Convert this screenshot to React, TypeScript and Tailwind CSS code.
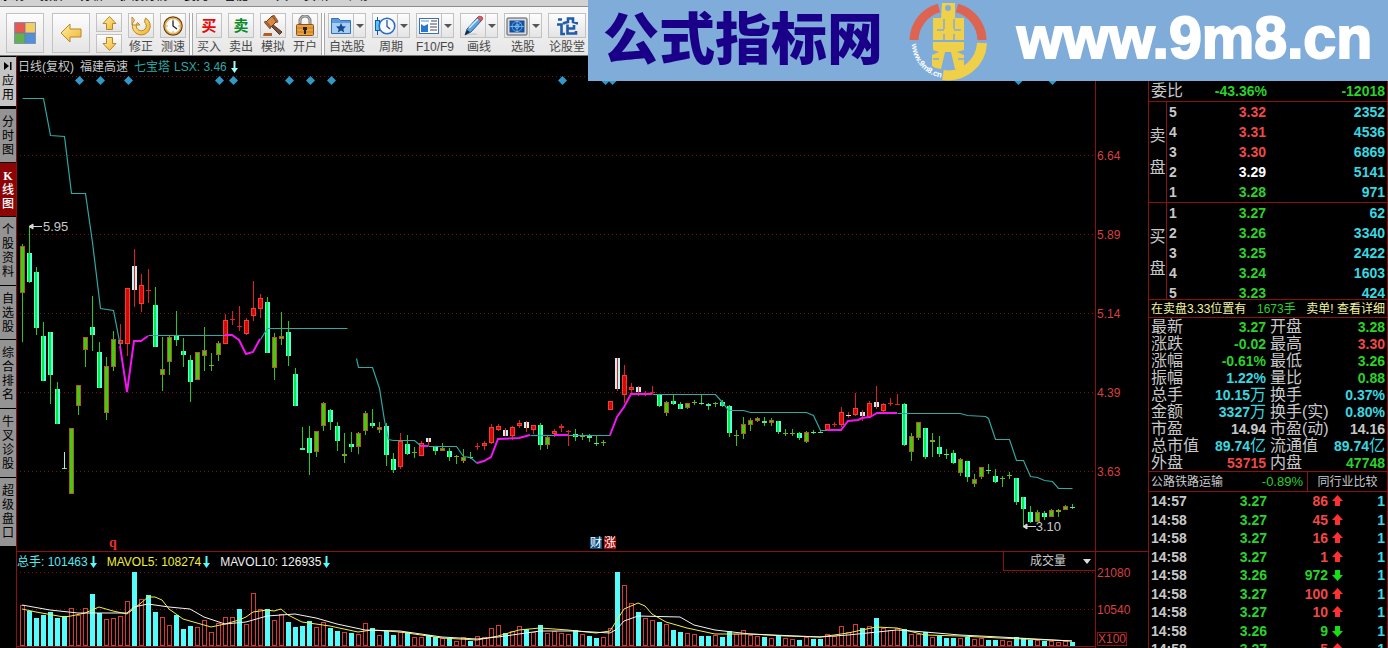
import React from "react";

type Kind = "d" | "g" | "r" | "w";
type Candle = [number, number, number, number, Kind];

// high, body top, body bottom, low, kind
const candles: Candle[] = [
  [244, 246, 293, 342, "g"], [226, 253, 282, 283, "d"], [267, 272, 328, 335, "d"], [322, 336, 381, 381, "d"],
  [332, 332, 375, 404, "d"], [382, 389, 424, 424, "d"], [452, 468, 469, 469, "d"], [428, 428, 494, 494, "g"],
  [385, 385, 406, 415, "g"], [337, 337, 350, 367, "g"], [296, 327, 335, 351, "d"], [342, 352, 388, 388, "d"],
  [357, 366, 413, 420, "g"], [331, 339, 367, 371, "g"], [324, 340, 344, 350, "r"], [288, 288, 344, 356, "r"],
  [249, 266, 290, 307, "w"], [274, 285, 304, 312, "r"], [269, 290, 291, 303, "r"], [287, 305, 347, 347, "d"],
  [337, 369, 375, 391, "g"], [336, 337, 362, 375, "g"], [311, 336, 340, 346, "d"], [338, 351, 355, 367, "d"],
  [355, 360, 382, 402, "d"], [352, 352, 380, 380, "g"], [327, 350, 356, 371, "g"], [353, 365, 366, 371, "g"],
  [341, 343, 355, 361, "g"], [314, 320, 344, 344, "r"], [311, 319, 320, 325, "r"], [306, 326, 327, 331, "r"],
  [318, 320, 334, 335, "r"], [281, 308, 316, 321, "r"], [294, 298, 309, 318, "r"], [297, 302, 353, 353, "d"],
  [333, 337, 368, 380, "g"], [312, 336, 339, 345, "g"], [321, 332, 356, 366, "d"], [368, 374, 406, 406, "d"],
  [427, 448, 450, 450, "d"], [426, 438, 453, 475, "d"], [431, 431, 452, 457, "g"], [402, 403, 426, 431, "g"],
  [409, 410, 422, 430, "d"], [422, 426, 441, 451, "d"], [433, 454, 456, 463, "g"], [432, 444, 447, 452, "d"],
  [432, 433, 447, 454, "g"], [411, 413, 431, 435, "g"], [409, 423, 426, 428, "d"], [422, 427, 430, 433, "g"],
  [423, 426, 455, 466, "d"], [453, 459, 470, 473, "d"], [433, 441, 467, 469, "r"], [435, 444, 454, 455, "d"],
  [447, 452, 453, 458, "g"], [441, 443, 456, 456, "r"], [438, 438, 442, 446, "w"], [447, 447, 451, 455, "d"],
  [443, 448, 451, 451, "g"], [448, 451, 457, 461, "d"], [455, 456, 457, 464, "g"], [449, 457, 461, 463, "g"],
  [452, 457, 458, 459, "d"], [443, 446, 447, 450, "r"], [441, 443, 446, 450, "r"], [424, 427, 443, 444, "r"],
  [424, 426, 430, 431, "r"], [428, 430, 436, 436, "w"], [426, 427, 436, 440, "r"], [420, 423, 426, 428, "r"],
  [421, 422, 428, 432, "w"], [425, 425, 430, 434, "r"], [423, 425, 445, 450, "d"], [436, 437, 445, 449, "g"],
  [429, 431, 434, 437, "r"], [424, 426, 428, 432, "r"], [430, 431, 432, 446, "r"], [429, 434, 437, 441, "d"],
  [433, 436, 437, 440, "g"], [434, 436, 438, 442, "d"], [436, 443, 444, 446, "d"], [440, 442, 443, 446, "g"],
  [401, 401, 410, 410, "r"], [358, 358, 389, 391, "w"], [365, 375, 395, 403, "r"], [383, 387, 390, 393, "r"],
  [386, 387, 392, 396, "w"], [391, 394, 395, 396, "r"], [386, 392, 393, 394, "r"], [394, 395, 406, 407, "d"],
  [401, 402, 413, 416, "g"], [394, 401, 404, 405, "d"], [402, 404, 409, 409, "d"], [403, 403, 408, 409, "g"],
  [400, 402, 403, 405, "g"], [395, 403, 404, 405, "d"], [403, 404, 406, 410, "d"], [402, 403, 404, 407, "g"],
  [400, 402, 406, 407, "d"], [405, 406, 433, 437, "d"], [430, 435, 436, 446, "g"], [417, 424, 434, 439, "g"],
  [418, 420, 425, 431, "g"], [417, 418, 421, 422, "g"], [417, 421, 423, 426, "d"], [418, 420, 423, 426, "g"],
  [421, 421, 432, 434, "d"], [429, 433, 434, 436, "g"], [429, 433, 434, 436, "g"], [432, 433, 438, 440, "d"],
  [431, 432, 442, 443, "g"], [430, 432, 433, 434, "d"], [430, 432, 433, 433, "d"], [424, 424, 430, 430, "r"],
  [422, 424, 425, 427, "r"], [407, 412, 425, 427, "r"], [412, 415, 416, 418, "w"], [393, 408, 415, 416, "r"],
  [410, 412, 416, 421, "w"], [401, 403, 417, 417, "r"], [386, 402, 407, 409, "w"], [403, 404, 411, 412, "r"],
  [398, 403, 404, 406, "r"], [394, 404, 405, 405, "r"], [403, 404, 445, 446, "d"], [433, 436, 452, 461, "g"],
  [422, 422, 438, 440, "g"], [428, 428, 457, 459, "d"], [433, 440, 442, 457, "g"], [436, 447, 454, 457, "d"],
  [449, 454, 455, 459, "d"], [450, 453, 463, 464, "d"], [458, 459, 473, 476, "g"], [461, 461, 477, 482, "d"],
  [474, 479, 484, 487, "g"], [467, 467, 477, 479, "g"], [464, 470, 471, 474, "d"], [469, 476, 482, 483, "d"],
  [476, 478, 479, 487, "g"], [472, 475, 476, 479, "g"], [478, 478, 502, 505, "d"], [497, 497, 509, 526, "d"],
  [506, 512, 522, 523, "d"], [510, 512, 522, 522, "g"], [511, 513, 517, 520, "d"], [509, 510, 517, 517, "g"],
  [509, 510, 512, 517, "g"], [505, 506, 510, 510, "g"], [504, 507, 508, 509, "d"],
];

// top of each volume bar; negative values are falling days
const volumes = [
  605, -611, -618, -615, -612, -618, -616, 608, 615, 608, -594, -613, 619, 618, 616, 601, -572, 599, -595, -612,
  617, 625, -615, -629, -626, 627, 620, 632, 623, 617, 617, -609, 624, 593, 609, -609, 620, 614, -622, -627,
  -626, -621, 627, 622, -628, -631, 632, -633, 634, 623, -628, 635, -631, -635, 632, -632, 637, 637, -635, -637,
  638, -638, 641, 637, -641, 636, 637, 628, 625, -633, 631, 626, -629, 632, -625, 633, 631, 633, 634, -630,
  634, -636, -638, 637, 628, -572, 585, 603, -612, 618, 620, -622, 624, -630, -632, 633, 634, -636, -636, 635,
  -637, -631, 634, 630, 635, 636, -637, 638, -636, 638, 639, -640, 637, -639, -639, 634, 636, 626, 632, 624,
  -628, 626, -618, 628, 630, 628, -629, 634, 634, -632, 637, -636, -638, -638, 638, -637, 639, 638, -640, -640,
  640, 641, -637, -638, -640, 640, -641, 641, 642, 641, -642,
];

const ma5 = "22,609 36,612 64,617 71,616 85,613 99,607 113,611 127,614 141,603 148,597 155,597 162,600 169,609 183,619 204,625 211,627 225,624 239,620 246,617 253,612 267,610 274,611 281,609 288,615 302,622 330,626 358,632 372,630 400,632 442,638 477,640 498,636 519,630 540,628 568,630 596,633 610,631 617,620 624,609 638,603 645,606 652,614 666,622 687,628 715,634 750,634 785,636 820,637 848,633 876,627 897,628 925,635 960,636 1000,638 1072,641";
const ma10 = "22,605 50,610 78,613 127,613 134,607 148,604 169,607 190,609 204,617 225,624 246,622 267,616 295,614 316,618 337,624 365,630 400,631 442,637 477,639 498,637 519,634 540,631 575,631 610,633 617,629 624,621 638,616 680,617 694,625 715,630 750,634 820,637 848,635 897,630 925,632 960,635 1000,637 1072,641";

const trend = [
  "22,98 43,98 50,135 64,136 71,193 85,193 92,242 100,308 113,310 120,346",
  "148,335 225,335",
  "260,339 267,328 347,328",
  "356,358 358,367 372,367 379,388 384,420 388,439 393,440 414,440 421,446",
  "428,446 456,446 463,456 470,457 477,463",
  "530,435 554,435", "568,435 610,435",
  "652,394 715,394 722,402 728,410 743,410 750,412 806,412 813,415 820,430 827,430",
  "897,413 960,413 967,415 985,416 988,418 995,439 1009,439 1016,460 1023,460 1030,476 1037,477 1044,480 1052,481 1058,488 1072,488",
];
const strong = [
  "120,346 127,392 134,341 141,341 148,336",
  "225,335 232,335 239,340 246,354 253,352 260,339",
  "421,446 428,446",
  "477,463 484,461 491,457 498,439 519,438 530,435",
  "554,435 568,435",
  "610,435 617,417 624,407 631,394 652,394",
  "827,430 841,430 848,421 858,420 862,418 870,417 877,413 897,413",
];
const diamonds = [79, 100, 128, 219, 233, 289, 310, 331, 562, 605, 612, 1018, 1052];

const wick: Record<Kind, string> = { d: "#25c825", g: "#35c020", r: "#e02020", w: "#e02020" };

function CandleShape({ c, x }: { c: Candle; x: number }) {
  const [hi, top, bot, lo, k] = c;
  const h = Math.max(1, bot - top);
  return (
    <g>
      <rect x={x} y={hi} width={1} height={Math.max(1, lo - hi)} fill={wick[k]} />
      {h <= 2 ? (
        <rect x={x - 2} y={top} width={5} height={h} fill={k === "d" ? "#50e8a0" : k === "g" ? "#80a818" : k === "r" ? "#e82020" : "#e8d0d0"} />
      ) : k === "d" ? (
        <>
          <rect x={x - 2} y={top} width={5} height={h} fill="#5cffdc" />
          <rect x={x - 1} y={top} width={2} height={h} fill="#00f040" />
        </>
      ) : k === "g" ? (
        <>
          <rect x={x - 2} y={top} width={5} height={h} fill="#b85a20" />
          <rect x={x - 1} y={top + 1} width={3} height={h - 2} fill="#38d010" />
        </>
      ) : k === "r" ? (
        <>
          <rect x={x - 2} y={top} width={5} height={h} fill="#f04030" />
          <rect x={x - 1} y={top + 1} width={3} height={h - 2} fill="#d80808" />
        </>
      ) : (
        <>
          <rect x={x - 2} y={top} width={5} height={h} fill="#c8f0f0" />
          <rect x={x} y={top} width={1} height={h} fill="#f02020" />
        </>
      )}
    </g>
  );
}

function PriceChart() {
  return (
    <svg viewBox="17 76 1078 475" preserveAspectRatio="none" className="absolute inset-0 h-full w-full" role="img" aria-label="日线图">
      <g stroke="#7a1212" strokeDasharray="1 3" shapeRendering="crispEdges">
        {[76, 155, 234, 313, 392, 471].map((y) => (
          <line key={y} x1={20} x2={1095} y1={y + 0.5} y2={y + 0.5} />
        ))}
      </g>
      {diamonds.map((x) => (
        <path key={x} d={`M${x + 0.5} 76l4.5 4.5-4.5 4.5-4.5-4.5z`} fill="#2f9ac8" />
      ))}
      <g shapeRendering="crispEdges">
        {candles.map((c, i) => (
          <CandleShape key={i} c={c} x={22 + i * 7} />
        ))}
        <rect x={64} y={452} width={1} height={17} fill="#a0f0f0" />
      </g>
      <g fill="none" stroke="#2ea9a4" strokeWidth={1.2}>
        {trend.map((p) => <polyline key={p} points={p} transform="translate(.5 .5)" />)}
      </g>
      <g fill="none" stroke="#f414f4" strokeWidth={2}>
        {strong.map((p) => <polyline key={p} points={p} />)}
      </g>
      <g stroke="#d8d8d8" fill="#d8d8d8">
        <path d="M30 226.500H42M29 226.500l4-2.500v5zM1024 526.500H1036M1023 526.500l4-2.500v5z" />
      </g>
    </svg>
  );
}

function VolumeChart() {
  return (
    <svg viewBox="17 571 1078 77" preserveAspectRatio="none" className="h-full w-full" role="img" aria-label="成交量图">
      <g stroke="#7a1212" strokeDasharray="1 3" shapeRendering="crispEdges">
        <line x1={20} x2={1095} y1={572.5} y2={572.5} />
        <line x1={20} x2={1095} y1={609.5} y2={609.5} />
      </g>
      <g shapeRendering="crispEdges">
        {volumes.map((v, i) => {
          const top = Math.abs(v);
          const x = 20 + i * 7;
          return v < 0 ? (
            <rect key={i} x={x} y={top} width={5} height={646 - top} fill="#54fcfc" />
          ) : (
            <rect key={i} x={x + 0.5} y={top + 0.5} width={4} height={645 - top} fill="#000" stroke="#d83a3a" />
          );
        })}
        <line x1={17} x2={1095} y1={646.5} y2={646.5} stroke="#8c1010" />
      </g>
      <polyline points={ma5} fill="none" stroke="#f0f040" />
      <polyline points={ma10} fill="none" stroke="#f4f4f4" />
    </svg>
  );
}

function Arrow({ up, className }: { up?: boolean; className?: string }) {
  return (
    <svg viewBox="0 0 11 12" className={className ?? "h-3 w-[11px]"} aria-hidden="true">
      <path d={up ? "M5.500 0L11 6H8v5H3V6H0z" : "M5.500 12L11 6H8V1H3v5H0z"} fill={up ? "#ff3030" : "#14e014"} />
    </svg>
  );
}

function DownTick({ color = "#54fcfc" }: { color?: string }) {
  return (
    <svg viewBox="0 0 7 12" className="h-3 w-[7px]" aria-hidden="true">
      <path d="M2.500 0h2v7H7L3.500 12 0 7h2.500z" fill={color} />
    </svg>
  );
}

const yellow = { fill: "url(#gold)", stroke: "#b8862a", strokeWidth: 1 };

const icons: Record<string, React.ReactNode> = {
  修正: (
    <path {...yellow} d="M2 2L2 10L10 10L7.500 7.500A5 5 0 1 0 14.500 7L15.500 3A9 9 0 1 1 4.500 5Z" />
  ),
  测速: (
    <>
      <circle cx="11" cy="11" r="9" fill="#fff" stroke="#6a4010" strokeWidth="1.500" />
      <circle cx="11" cy="11" r="7.800" fill="none" stroke="#e8b048" strokeWidth="1.600" />
      <path d="M11 5.500V11l4 3" fill="none" stroke="#222" strokeWidth="1.300" />
      <path d="M11 4.500v1M11 16.500v1M4.500 11h1M16.500 11h1" stroke="#555" />
    </>
  ),
  模拟: (
    <>
      <path d="M10 9l10 8-2.500 2.500-9-9z" fill="#805038" stroke="#503020" />
      <path d="M3 8l7-7 5 5-7 7z" fill="#d88848" stroke="#6a3814" />
      <path d="M2 7l2-1 5 6-1 2zM10 1l2-1 4 6-1 2z" fill="#b86a30" stroke="#6a3814" strokeWidth=".6" />
      <path d="M2 18h8v3H1z" fill="#b45c28" />
    </>
  ),
  开户: (
    <>
      <path d="M6 10V6a5 5 0 0 1 10 0v4" fill="none" stroke="#777" strokeWidth="3" />
      <path d="M6 8V6a5 5 0 0 1 10 0v4" fill="none" stroke="#ccc" />
      <rect x="2.500" y="9.500" width="17" height="11" rx="1" fill="#eaa03c" stroke="#8a5418" />
      <path d="M3 13h16M3 17h16" stroke="#c07c28" />
      <path d="M9 12h4v3h-1v4h-2v-4H9z" fill="#222" />
    </>
  ),
  自选股: (
    <>
      <path d="M1.500 3.500h7l2 2h10v13h-19z" fill="#5b9be0" stroke="#3272b8" />
      <path d="M2 8h18v10H2z" fill="#a6cdf4" />
      <path d="M11 8l1.500 3.300 3.500.3-2.600 2.300.8 3.500L11 15.600l-3.200 1.800.8-3.500L6 11.600l3.500-.3z" fill="#174a86" />
    </>
  ),
  周期: (
    <>
      <path d="M3.500 2v18" stroke="#1656b4" />
      <rect x="1.500" y="5.500" width="4" height="10" fill="#58c8f0" stroke="#1656b4" />
      <circle cx="13" cy="11" r="7.800" fill="#f4faff" stroke="#2c6cc0" strokeWidth="1.600" />
      <path d="M13 5v6.500l3 2.500" fill="none" stroke="#1c4c94" strokeWidth="1.200" />
    </>
  ),
  "F10/F9": (
    <>
      <rect x="1.500" y="3.500" width="19" height="15" fill="#fff" stroke="#3a70b8" />
      <path d="M3 5h8v2H3z" fill="#a9c8ec" />
      <path d="M3 9l3 2 4-2v8H3z" fill="#2878d0" />
      <path d="M12 9h7M12 12h7M12 15h7M13 6h6" stroke="#446" />
    </>
  ),
  画线: (
    <>
      <path d="M2 20h14l-3-2z" fill="#ccc" />
      <path d="M3 20l2-6L16 2l4 3L9 17z" fill="#5ca4e4" stroke="#2c5c98" />
      <path d="M15 3l2-2q4 0 4 3l-2 2z" fill="#e05858" stroke="#a03030" strokeWidth=".6" />
      <path d="M7 13L16 4" stroke="#d8efff" strokeWidth="1.500" />
      <path d="M3 20l2-5 3 2z" fill="#222" />
    </>
  ),
  选股: (
    <>
      <rect x="1" y="3" width="20" height="17" rx="1" fill="#d8dce2" stroke="#555" />
      <rect x="3.500" y="5.500" width="15" height="12" fill="#174f9c" />
      <circle cx="11" cy="11.500" r="5" fill="none" stroke="#62aef0" />
      <circle cx="11" cy="11.500" r="2" fill="none" stroke="#62aef0" />
      <path d="M11 6v11M4 11.500h14M11 11.500l4-4" stroke="#8fd0ff" strokeWidth=".7" />
    </>
  ),
  论股堂: (
    <g fill="none" stroke="#1f5caa" strokeWidth="2.600">
      <path d="M2 4.500h4M1 9.500h4.500V19H9" />
      <path d="M8 9.500V8l4-1V3.500h5V7l4 1v1.500" />
      <path d="M11.500 9.500V18.500H20V16M11.500 13.500H18V10" />
    </g>
  ),
};

function Face({ name }: { name: string }) {
  if (name === "买入") return <span className="text-[15px] leading-6 font-bold text-[#e80808]">买</span>;
  if (name === "卖出") return <span className="text-[15px] leading-6 font-bold text-[#0a8a28]">卖</span>;
  return <svg viewBox="0 0 22 22" className="h-[22px] w-[22px]" aria-hidden="true">{icons[name]}</svg>;
}

const box = "flex items-center justify-center border border-[#c2c2c2] bg-gradient-to-b from-[#fdfdfd] to-[#e4e4e4]";

function Tool({ name, menu, wide }: { name: string; menu?: boolean; wide?: boolean }) {
  return (
    <button className={menu || wide ? "flex w-[38px] flex-none flex-col items-center" : "flex w-[26px] flex-none flex-col items-center"}>
      <span className={`${box} h-[25px] w-full`}>
        <span className="flex flex-1 justify-center"><Face name={name} /></span>
        {menu && (
          <span className="flex h-full w-3 items-center justify-center border-l border-[#c2c2c2]">
            <svg viewBox="0 0 8 4" className="h-1 w-2" aria-hidden="true"><path d="M0 0h8L4 4z" fill="#555" /></svg>
          </span>
        )}
      </span>
      <span className="mt-0.5 text-[12px] leading-[14px] whitespace-nowrap text-[#484848]">{name}</span>
    </button>
  );
}

function Divider() {
  return <span className="mx-[3px] h-[44px] w-1 flex-none border-x border-[#a8a8a8] bg-white" />;
}

function TopBar() {
  return (
    <header className="h-14 flex-none overflow-hidden border-b border-[#777] bg-[#ececec]">
      <svg className="absolute h-0 w-0" aria-hidden="true">
        <defs>
          <linearGradient id="gold" x1="0" y1="0" x2="1" y2="1">
            <stop offset="0" stopColor="#fff0a0" />
            <stop offset="1" stopColor="#f0b430" />
          </linearGradient>
        </defs>
      </svg>
      <nav className="flex h-[7px] items-end gap-4 overflow-hidden border-b border-[#8c8c8c] bg-[#d2d2d2] pb-1 text-[12px] leading-3 text-black">
        {["系统", "报价", "分析", "扩展行情", "委托", "智能", "工具", "资讯", "帮助"].map((m) => <a key={m} href="#">{m}</a>)}
      </nav>
      <div className="flex h-[49px] items-start bg-gradient-to-b from-[#f8f8f8] to-[#e6e6e6] pt-1.5 pl-[6px]">
        <button aria-label="首页" className={`${box} h-10 w-[38px] flex-none`}>
          <svg viewBox="0 0 22 22" className="h-[22px] w-[22px]" aria-hidden="true">
            <path d="M1 1h10v10H1z" fill="#e85850" /><path d="M11 1h10v10H11z" fill="#f4cc60" />
            <path d="M1 11h10v10H1z" fill="#64b04c" /><path d="M11 11h10v10H11z" fill="#5090d8" />
            <path d="M.5.500h21v21H.5zM11 1v20M1 11h20" fill="none" stroke="#6878a0" strokeWidth=".8" />
          </svg>
        </button>
        <button aria-label="后退" className={`${box} ml-2 h-10 w-[38px] flex-none`}>
          <svg viewBox="0 0 22 20" className="h-5 w-[22px]" aria-hidden="true"><path {...yellow} d="M1 10l9-9v5h11v8H10v5z" /></svg>
        </button>
        <div className="mx-1.5 flex w-[26px] flex-none flex-col gap-0.5">
          <button aria-label="上翻" className={`${box} h-[19px]`}>
            <svg viewBox="0 0 15 14" className="h-[14px] w-[15px]" aria-hidden="true"><path {...yellow} d="M7.500.500l6.500 7h-3.500v6h-6v-6H1z" /></svg>
          </button>
          <button aria-label="下翻" className={`${box} h-[19px]`}>
            <svg viewBox="0 0 15 14" className="h-[14px] w-[15px]" aria-hidden="true"><path {...yellow} d="M7.500 13.500l6.500-7h-3.500v-6h-6v6H1z" /></svg>
          </button>
        </div>
        <div className="flex gap-1.5"><Tool name="修正" /><Tool name="测速" /></div>
        <Divider />
        <div className="flex gap-1.5"><Tool name="买入" /><Tool name="卖出" /><Tool name="模拟" /><Tool name="开户" /></div>
        <Divider />
        <div className="flex gap-1.5">
          <Tool name="自选股" menu /><Tool name="周期" menu /><Tool name="F10/F9" menu /><Tool name="画线" menu /><Tool name="选股" menu /><Tool name="论股堂" wide />
        </div>
      </div>
    </header>
  );
}

function Banner() {
  return (
    <div className="absolute top-0 right-0 z-10 flex h-[81px] w-[800px] items-center bg-[#80acda] pl-[15px]">
      <span className="pb-3 font-['Noto_Sans_CJK_SC',sans-serif] text-[56px] leading-none font-black whitespace-nowrap text-[#1a0088]">公式指标网</span>
      <svg viewBox="0 0 78 80" className="ml-[26px] h-20 w-[78px] flex-none" aria-label="www.9m8.cn">
        <g fill="none">
          <path d="M5 39A34 34 0 0 1 30 7" stroke="#dc6450" strokeWidth="9" />
          <path d="M48 7A34 34 0 0 1 73 39" stroke="#dc6450" strokeWidth="9" />
          <path d="M73 42A34 34 0 0 1 34 74" stroke="#f0d048" strokeWidth="10" />
        </g>
        <path d="M33 2h13v15h9v22H24V17h8zM24 41h31v8l-7 2 7 3v12q-4 3-9 2L42 51h-6L32 68q-5 0-9-3V54l7-3-6-2z" fill="#f0d048" />
        <path d="M35 18v10M35 29h-7M45 18v10M45 29h7M35 33v6M45 33v6M24 58h6M55 58h-6" stroke="#80acda" strokeWidth="1.500" />
        <circle cx="39" cy="7" r="3" fill="#80acda" />
        <defs><path id="ring" d="M3 43A35 35 0 0 0 40 77" /></defs>
        <text fill="#fff" fontSize="8" fontWeight="700" fontFamily="Liberation Sans, sans-serif"><textPath href="#ring">www.9m8.cn</textPath></text>
      </svg>
      <span className="ml-[30px] pb-1 font-['Liberation_Sans',sans-serif] text-[59px] leading-none font-bold whitespace-nowrap text-white [-webkit-text-stroke:2px_white]">www.9m8.cn</span>
    </div>
  );
}

const tabBase = "flex w-4 flex-none flex-col items-center justify-center border-b border-black text-[12px] leading-[14px]";

function SideTabs() {
  return (
    <nav className="flex w-[17px] flex-none flex-col border-r border-[#8c1010] bg-black">
      <button className={`${tabBase} mt-px mb-0.5 h-[50px] bg-[#c4c4c4] text-black`}>
        <svg viewBox="0 0 8 8" className="mb-1 h-2 w-2" aria-hidden="true"><path d="M0 0l5 4-5 4zM6 0h1.500v8H6z" /></svg>
        <span>应</span><span>用</span>
      </button>
      {[
        ["分时图", "h-[54px]"], ["K线图", "h-[54px]"], ["个股资料", "h-[69px]"], ["自选股", "h-[54px]"],
        ["综合排名", "h-[69px]"], ["牛叉诊股", "h-[69px]"], ["超级盘口", "h-[69px]"],
      ].map(([t, h]) => (
        <button key={t} className={t === "K线图" ? `${tabBase} ${h} bg-[#8c0404] font-medium text-white` : `${tabBase} ${h} bg-[#949494] text-black`}>
          {t.split("").map((ch, i) => (
            <span key={i} className={ch === "K" ? "font-['Liberation_Serif',serif] font-bold" : ""}>{ch}</span>
          ))}
        </button>
      ))}
    </nav>
  );
}

const red = "text-[#f04848]";
const green = "text-[#2ad22a]";
const cyan = "text-[#38d8e0]";
const grey = "text-[#c8c8c8]";

const asks: [string, string, string, string][] = [
  ["5", "3.32", red, "2352"], ["4", "3.31", red, "4536"], ["3", "3.30", red, "6869"], ["2", "3.29", "text-white", "5141"], ["1", "3.28", green, "971"],
];
const bids: [string, string, string, string][] = [
  ["1", "3.27", green, "62"], ["2", "3.26", green, "3340"], ["3", "3.25", green, "2422"], ["4", "3.24", green, "1603"], ["5", "3.23", green, "424"],
];

function Book({ title, rows }: { title: string; rows: [string, string, string, string][] }) {
  return (
    <div className="flex flex-none border-t border-[#8c1010]">
      <div className="flex w-[18px] flex-col items-center justify-center gap-4 border-r border-[#8c1010] text-[16px] leading-4 text-[#c8c8c8]">
        {title.split("").map((c) => <span key={c}>{c}</span>)}
      </div>
      <table className="flex-1 table-fixed border-collapse text-[14px] leading-[19px] font-bold">
        <tbody>
          {rows.map(([n, p, c, v]) => (
            <tr key={n + p} className="h-5">
              <td className="w-5 p-0 pl-0.5 text-[#c8c8c8]">{n}</td>
              <td className={`w-[79px] p-0 text-right ${c}`}>{p}</td>
              <td className={`p-0 pr-0.5 text-right ${cyan}`}>{v}</td>
            </tr>
          ))}
        </tbody>
      </table>
    </div>
  );
}

const stats = [
  ["最新", "3.27", green, "开盘", "3.28", green], ["涨跌", "-0.02", green, "最高", "3.30", red],
  ["涨幅", "-0.61%", green, "最低", "3.26", green], ["振幅", "1.22%", cyan, "量比", "0.88", green],
  ["总手", "10.15万", cyan, "换手", "0.37%", cyan], ["金额", "3327万", cyan, "换手(实)", "0.80%", cyan],
  ["市盈", "14.94", grey, "市盈(动)", "14.16", grey], ["总市值", "89.74亿", cyan, "流通值", "89.74亿", cyan],
  ["外盘", "53715", red, "内盘", "47748", green],
];
const ticks: [string, string, string, boolean][] = [
  ["14:57", "3.27", "86", true], ["14:58", "3.27", "45", true], ["14:58", "3.27", "16", true], ["14:58", "3.27", "1", true],
  ["14:58", "3.26", "972", false], ["14:58", "3.27", "100", true], ["14:58", "3.27", "10", true], ["14:58", "3.26", "9", false], ["14:58", "3.27", "5", true],
];

function Value({ v }: { v: string }) {
  const unit = /[万亿]$/.test(v) ? v.slice(-1) : "";
  return <>{unit ? v.slice(0, -1) : v}{unit && <span className="text-[16px] leading-none font-normal">{unit}</span>}</>;
}

function QuotePanel() {
  return (
    <aside className="flex w-60 flex-none flex-col overflow-hidden border-r border-l border-[#8c1010] pt-[25px]">
      <div className="flex h-5 flex-none items-center pr-0.5 pl-0.5 text-[14px] font-bold">
        <span className="w-[60px] text-[16px] font-normal text-[#c8c8c8]">委比</span>
        <span className={`w-14 text-right ${green}`}>-43.36%</span>
        <span className={`flex-1 text-right ${green}`}>-12018</span>
      </div>
      <Book title="卖盘" rows={asks} />
      <Book title="买盘" rows={bids} />
      <a href="#" className="relative -mt-1 flex h-[19px] flex-none items-center justify-between border-y border-[#8c1010] bg-black px-0.5 text-[12px] whitespace-nowrap text-[#f4f4a0]">
        <span>在卖盘3.33位置有</span><span className={green}>1673手</span><span>卖单! 查看详细</span>
      </a>
      <table className="w-full flex-none table-fixed border-collapse text-[14px] font-bold">
        <tbody>
          {stats.map(([a, b, c, d, e, f]) => (
            <tr key={a} className="h-[17px] leading-4">
              <th className="w-12 p-0 pl-0.5 text-left align-middle text-[16px] leading-4 font-normal whitespace-nowrap text-[#c8c8c8]">{a}</th>
              <td className={`w-[69px] p-0 text-right align-middle leading-4 whitespace-nowrap ${c}`}><Value v={b} /></td>
              <th className="w-[62px] p-0 pl-1 text-left align-middle text-[16px] leading-4 font-normal whitespace-nowrap text-[#c8c8c8]">{d}</th>
              <td className={`p-0 pr-0.5 text-right align-middle leading-4 whitespace-nowrap ${f}`}><Value v={e} /></td>
            </tr>
          ))}
        </tbody>
      </table>
      <div className="flex h-[21px] flex-none items-center border-y border-[#8c1010] text-[12px] text-[#c8c8c8]">
        <span className="flex-1 pl-0.5">公路铁路运输</span>
        <span className={`pr-1 text-[13px] ${green}`}>-0.89%</span>
        <a href="#" className="flex h-full w-20 items-center justify-center border-l border-[#8c1010]">同行业比较</a>
      </div>
      <table className="w-full flex-none table-fixed border-collapse text-[14px] leading-[18px] font-bold">
        <tbody>
          {ticks.map(([t, p, v, up], i) => (
            <tr key={i} className="odd:h-[18px] even:h-[19px]">
              <td className="w-[60px] p-0 pl-0.5 text-[#c8c8c8]">{t}</td>
              <td className={`w-[58px] p-0 text-right ${green}`}>{p}</td>
              <td className={`w-[61px] p-0 text-right ${up ? red : green}`}>{v}</td>
              <td className="w-5 p-0 pl-1"><Arrow up={up} /></td>
              <td className={`p-0 pr-0.5 text-right ${cyan}`}>1</td>
            </tr>
          ))}
        </tbody>
      </table>
    </aside>
  );
}

export default function App() {
  return (
    <div className="relative flex h-screen flex-col overflow-hidden bg-black font-['Liberation_Sans','Noto_Sans_CJK_SC',sans-serif]">
      <TopBar />
      <Banner />
      <div className="flex min-h-0 flex-1">
        <SideTabs />
        <main className="flex min-w-0 flex-1 flex-col text-[12px]">
          <section className="flex min-h-0 flex-1">
            <div className="flex min-w-0 flex-1 flex-col">
              <h1 className="flex h-5 flex-none items-center gap-1.5 pt-px pl-px text-[12px] whitespace-nowrap text-[#c8c8c8]">
                <span>日线(复权)</span><span>福建高速</span>
                <span className="flex items-center gap-1 text-[#2ea9a4]"><span>七宝塔</span><span>LSX: 3.46</span><DownTick color="#a8f8f8" /></span>
              </h1>
              <div className="relative min-h-0 flex-1">
                <PriceChart />
                <span className="absolute top-[143px] left-[26px] text-[13px] leading-4 text-[#c8c8c8]">5.95</span>
                <span className="absolute right-[34px] bottom-4 text-[13px] leading-4 text-[#c8c8c8]">3.10</span>
                <span className="absolute bottom-0 left-[92px] font-['Liberation_Serif',serif] text-[14px] leading-4 font-bold text-[#e83030]">q</span>
                <span className="absolute bottom-0.5 left-[573px] flex gap-0.5 text-[12px] leading-3 text-white">
                  <span className="bg-[#0a4a80]">财</span><span className="bg-[#a00808]">涨</span>
                </span>
              </div>
            </div>
            <div className="flex w-[53px] flex-none flex-col border-l border-[#8c1010] pt-[60px] pl-px text-[#d84040]">
              {["6.64", "5.89", "5.14", "4.39", "3.63"].map((p) => <span key={p} className="flex h-[79px] flex-none items-center">{p}</span>)}
            </div>
          </section>
          <section className="flex h-[97px] flex-none border-t border-[#8c1010]">
            <div className="flex min-w-0 flex-1 flex-col">
              <div className="flex h-[19px] flex-none items-center gap-2.5 whitespace-nowrap">
                <span className="flex items-center gap-0.5 text-[#54e8f0]">总手: 101463<DownTick /></span>
                <span className="flex items-center gap-0.5 text-[#f0f030]">MAVOL5: 108274<DownTick /></span>
                <span className="flex items-center gap-0.5 text-[#f0f0f0]">MAVOL10: 126935<DownTick /></span>
                <span className="relative ml-auto flex h-full w-[92px] items-center border-b border-l border-[#8c1010]">
                  <select aria-label="指标" className="h-full w-full appearance-none bg-transparent pl-[26px] text-[12px] text-[#c8c8c8]"><option>成交量</option></select>
                  <svg viewBox="0 0 8 5" className="pointer-events-none absolute right-1 h-[5px] w-2" aria-hidden="true"><path d="M0 0h8L4 5z" fill="#ddd" /></svg>
                </span>
              </div>
              <div className="min-h-0 flex-1"><VolumeChart /></div>
            </div>
            <div className="flex w-[53px] flex-none flex-col items-start border-l border-[#8c1010] pt-0.5 pl-px text-[#d84040]">
              <span className="flex h-[37px] items-center">21080</span>
              <span className="flex h-[37px] items-center">10540</span>
              <span className="mt-1 border border-[#8c1010] leading-3">X100</span>
            </div>
          </section>
        </main>
        <QuotePanel />
      </div>
    </div>
  );
}
